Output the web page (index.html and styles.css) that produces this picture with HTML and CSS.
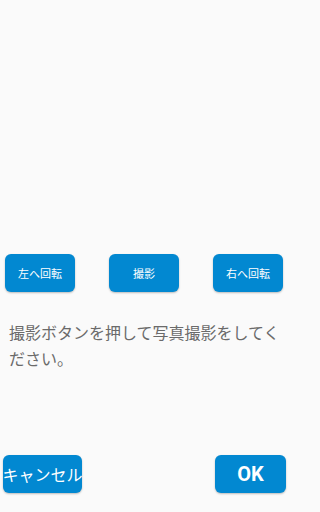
FILE: index.html
```html
<!DOCTYPE html>
<html lang="ja">
<head>
<meta charset="utf-8">
<link rel="stylesheet" href="styles.css">
</head>
<body>
<div class="screen">
  <div class="preview"></div>
  <div class="controls">
    <button class="btn small">左へ回転</button>
    <button class="btn small">撮影</button>
    <button class="btn small">右へ回転</button>
  </div>
  <p class="message">撮影ボタンを押して写真撮影をしてください。</p>
  <div class="spacer"></div>
  <div class="actions">
    <button class="btn cancel">キャンセル</button>
    <button class="btn ok">OK</button>
  </div>
</div>
</body>
</html>
```
FILE: styles.css
```css
html, body {
  margin: 0;
  padding: 0;
  background: #fafafa;
}
.screen {
  width: 288px;
  height: 512px;
  display: flex;
  flex-direction: column;
  font-family: Roboto, "Noto Sans CJK JP", sans-serif;
}
.preview {
  height: 254px;
  flex: none;
}
.btn {
  border: none;
  margin: 0;
  padding: 0;
  background: #0288d1;
  color: #ffffff;
  border-radius: 6px;
  box-shadow: 0 1px 2px rgba(0,0,0,0.25);
  font-family: Roboto, "Noto Sans CJK JP", sans-serif;
  height: 38px;
  display: flex;
  align-items: center;
  justify-content: center;
  white-space: nowrap;
  overflow: visible;
}
.controls {
  display: flex;
  justify-content: space-between;
  padding: 0 5px;
}
.small {
  width: 70px;
  font-size: 11px;
  font-weight: 400;
}
.message {
  margin: 27px 0 0 0;
  padding: 0 5px 0 9px;
  font-family: "Noto Sans CJK JP", sans-serif;
  font-size: 16px;
  line-height: 26px;
  color: #6a6a6a;
}
.spacer {
  flex: 1;
}
.actions {
  display: flex;
  justify-content: space-between;
  padding: 0 2px 19px 3px;
}
.cancel {
  width: 79px;
  font-size: 16px;
  font-family: "Noto Sans CJK JP", sans-serif;
}
.ok {
  width: 71px;
  font-size: 20px;
  font-weight: 700;
}
```
